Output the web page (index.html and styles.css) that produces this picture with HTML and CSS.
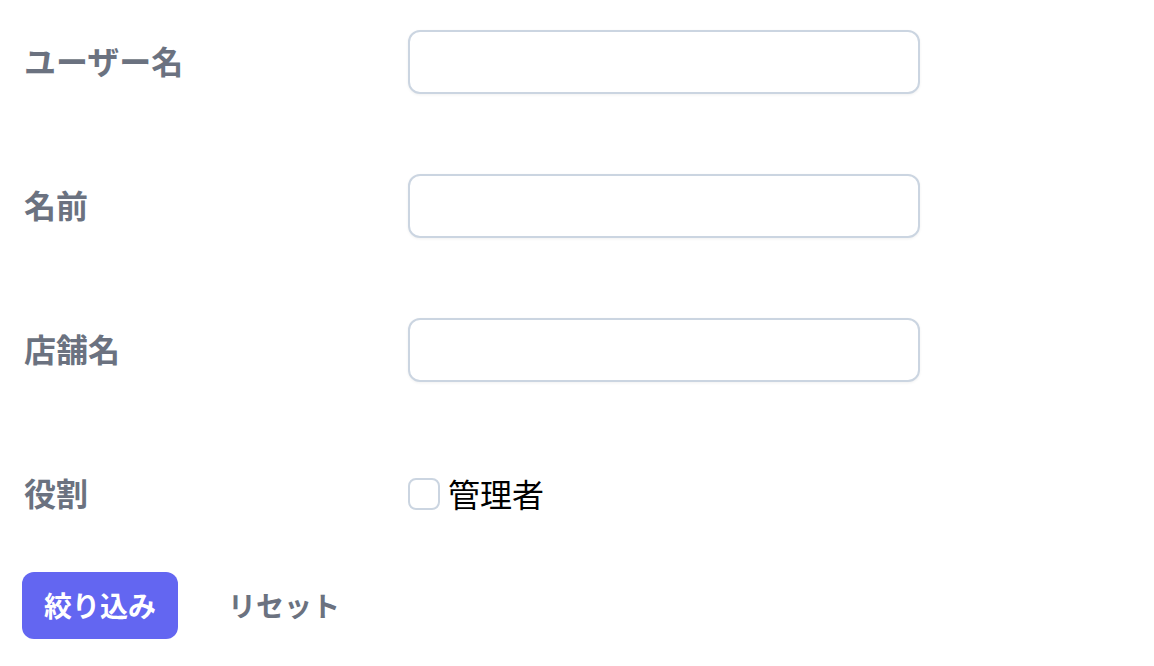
FILE: index.html
```html
<!DOCTYPE html>
<html lang="ja">
<head>
<meta charset="utf-8">
<title>絞り込み</title>
<link rel="stylesheet" href="styles.css">
</head>
<body>
<form class="filter">
  <div class="rows">
    <div class="row">
      <label class="label" for="username">ユーザー名</label>
      <input class="input" id="username" type="text">
    </div>
    <div class="row">
      <label class="label" for="name">名前</label>
      <input class="input" id="name" type="text">
    </div>
    <div class="row">
      <label class="label" for="shop">店舗名</label>
      <input class="input" id="shop" type="text">
    </div>
    <div class="row">
      <span class="label">役割</span>
      <label class="check">
        <span class="box"></span>
        <span class="check-text">管理者</span>
      </label>
    </div>
  </div>
  <div class="actions">
    <button type="button" class="btn-primary">絞り込み</button>
    <button type="button" class="btn-reset">リセット</button>
  </div>
</form>
</body>
</html>
```
FILE: styles.css
```css
html, body {
  margin: 0;
  padding: 0;
  background: #ffffff;
}
body {
  font-family: "Noto Sans CJK JP", "Noto Sans", sans-serif;
}
.filter {
  padding: 30px 0 0 22px;
}
.rows {
  display: flex;
  flex-direction: column;
  gap: 80px;
}
.row {
  display: grid;
  grid-template-columns: 386px 512px;
  align-items: center;
  height: 64px;
}
.label {
  padding-left: 2px;
  padding-bottom: 5px;
  font-size: 32px;
  font-weight: 700;
  color: #6b7280;
  line-height: 40px;
}
.input {
  box-sizing: border-box;
  width: 512px;
  height: 64px;
  border: 2px solid #cbd5e1;
  border-radius: 12px;
  box-shadow: 0 1px 3px rgba(0, 0, 0, 0.06);
  background: #fff;
  margin: 0;
  outline: none;
}
.check {
  display: flex;
  align-items: center;
  gap: 8px;
}
.box {
  box-sizing: border-box;
  width: 32px;
  height: 32px;
  border: 2px solid #cbd5e1;
  border-radius: 8px;
  background: #fff;
}
.check-text {
  font-size: 32px;
  color: #000;
  line-height: 40px;
  padding-bottom: 2px;
}
.actions {
  display: flex;
  align-items: center;
  gap: 50px;
  margin-top: 46px;
}
.btn-primary {
  height: 67px;
  padding: 0 22px 2px;
  border: none;
  border-radius: 12px;
  background: #6366f1;
  color: #fff;
  font-family: "Noto Sans CJK JP", "Noto Sans", sans-serif;
  font-size: 28px;
  font-weight: 700;
}
.btn-reset {
  padding: 0 0 2px;
  border: none;
  background: none;
  color: #6b7280;
  font-family: "Noto Sans CJK JP", "Noto Sans", sans-serif;
  font-size: 28px;
  font-weight: 700;
}
```
